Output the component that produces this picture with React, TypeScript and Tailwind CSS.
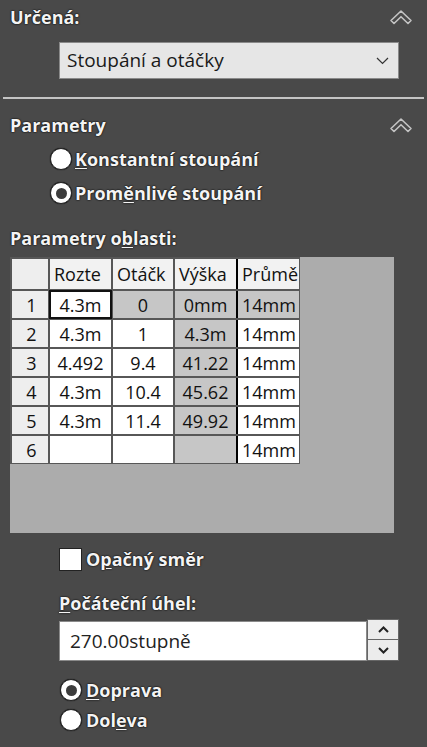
import React from "react";

const FONT = { fontFamily: '"Open Sans", "Noto Sans", sans-serif' };

function Chevrons() {
  return (
    <svg width="24" height="18" viewBox="0 0 24 18" className="shrink-0">
      <path d="M2 12.5 L12 3 L22 12.5 L19 15.5 L12 8.7 L5 15.5 Z" fill="none" stroke="#c4c4c4" strokeWidth="1.6" strokeLinejoin="round" />
    </svg>
  );
}

function Radio({ checked }: { checked?: boolean }) {
  return (
    <span className="w-[22px] h-[22px] rounded-full bg-white border border-[#222] flex items-center justify-center shrink-0 shadow-[0_0_1px_#000]">
      {checked && <span className="w-[11px] h-[11px] rounded-full bg-[#3c3c3c]" />}
    </span>
  );
}

const label = "text-[#f4f4f4] font-bold text-[18px] leading-none [text-shadow:0_0_2px_#000,0_0_1px_#000]";

type Cell = { t: string; g?: boolean; sel?: boolean };

const rows: Cell[][] = [
  [{ t: "4.3m", sel: true }, { t: "0", g: true }, { t: "0mm", g: true }, { t: "14mm", g: true }],
  [{ t: "4.3m" }, { t: "1" }, { t: "4.3m", g: true }, { t: "14mm" }],
  [{ t: "4.492" }, { t: "9.4" }, { t: "41.22", g: true }, { t: "14mm" }],
  [{ t: "4.3m" }, { t: "10.4" }, { t: "45.62", g: true }, { t: "14mm" }],
  [{ t: "4.3m" }, { t: "11.4" }, { t: "49.92", g: true }, { t: "14mm" }],
  [{ t: "" }, { t: "" }, { t: "", g: true }, { t: "14mm" }],
];

const headers = ["Rozte", "Otáčk", "Výška", "Průmě"];

export default function App() {
  return (
    <div style={FONT} className="w-[427px] h-[747px] bg-[#494949] overflow-hidden flex flex-col">
      {/* Určená */}
      <div className="h-[34px] flex items-center justify-between pl-[10px] pr-[14px]">
        <span className={label}>Určená:</span>
        <Chevrons />
      </div>
      <div className="mt-[8px] ml-[59px] w-[340px] h-[37px] bg-[#e6e6e6] border border-[#8a8a8a] flex items-center justify-between pl-[7px] pr-[9px]">
        <span className="text-[19px] leading-none text-[#1a1a1a]">Stoupání a otáčky</span>
        <svg width="13" height="8" viewBox="0 0 13 8">
          <path d="M1 1 L6.5 6.5 L12 1" fill="none" stroke="#333" strokeWidth="1.2" />
        </svg>
      </div>
      <div className="mt-[18px] mx-[3px] h-[2px] bg-[#c4c4c4]" />

      {/* Parametry */}
      <div className="mt-[9px] h-[34px] flex items-center justify-between pl-[10px] pr-[14px]">
        <span className={label}>Parametry</span>
        <Chevrons />
      </div>
      <div className="h-[34px] flex items-center pl-[50px] gap-[3px]">
        <Radio />
        <span className={label}>
          <span className="underline underline-offset-2">K</span>onstantní stoupání
        </span>
      </div>
      <div className="h-[34px] flex items-center pl-[50px] gap-[3px]">
        <Radio checked />
        <span className={label}>
          Prom<span className="underline underline-offset-2">ě</span>nlivé stoupání
        </span>
      </div>
      <div className="mt-[11px] h-[34px] flex items-center pl-[10px]">
        <span className={label}>
          Parametry o<span className="underline underline-offset-2">b</span>lasti:
        </span>
      </div>

      {/* Table area */}
      <div className="mt-[2px] ml-[10px] w-[384px] h-[276px] bg-[#acacac] flex items-start">
        <div className="grid grid-cols-[36px_61px_60px_61px_61px] grid-rows-[30px_repeat(6,27px)] gap-[2px] bg-[#575757] pt-[2px] pl-[2px] pr-[1px] pb-[1px]">
          <div className="bg-[#eeeeee]" />
          {headers.map((h, i) => (
            <div
              key={h}
              className={`bg-[#f2f2f2] overflow-hidden whitespace-nowrap pl-[4px] flex items-center text-[18px] leading-none text-[#111] ${i === 3 ? "shadow-[-2px_0_0_#000]" : ""}`}
            >
              {h}
            </div>
          ))}
          {rows.map((r, ri) => (
            <React.Fragment key={ri}>
              <div className="bg-[#eeeeee] flex items-center justify-center text-[18px] leading-none text-[#111] pl-[3px]">{ri + 1}</div>
              {r.map((c, ci) => (
                <div
                  key={ci}
                  className={`${c.g ? "bg-[#c6c6c6]" : "bg-white"} flex items-center ${ci === 3 ? "justify-start pl-[4px] shadow-[-2px_0_0_#000]" : "justify-center"} text-[18px] leading-none text-[#111] whitespace-nowrap overflow-hidden ${c.sel ? "outline-2 outline-[#111] -outline-offset-1" : ""}`}
                >
                  {c.t}
                </div>
              ))}
            </React.Fragment>
          ))}
        </div>
      </div>

      {/* Opačný směr */}
      <div className="mt-[14px] h-[24px] flex items-center pl-[59px] gap-[4px]">
        <span className="w-[23px] h-[23px] bg-white border border-[#222] shrink-0" />
        <span className={label}>
          O<span className="underline underline-offset-2">p</span>ačný směr
        </span>
      </div>

      <div className="mt-[22px] h-[20px] flex items-center pl-[59px]">
        <span className={label}>
          <span className="underline underline-offset-2">P</span>očáteční úhel:
        </span>
      </div>
      <div className="mt-[8px] ml-[59px] flex">
        <div className="w-[308px] h-[40px] bg-white border border-[#8a8a8a] flex items-center pl-[10px] text-[19px] leading-none text-[#222]">
          270.00stupně
        </div>
        <div className="w-[32px] h-[42px] -mt-[2px] flex flex-col">
          <div className="h-[21px] bg-[#ececec] border border-[#666] flex items-center justify-center">
            <svg width="11" height="7" viewBox="0 0 11 7">
              <path d="M1 6 L5.5 1.5 L10 6" fill="none" stroke="#222" strokeWidth="2" />
            </svg>
          </div>
          <div className="h-[21px] bg-[#ececec] border border-[#666] border-t-0 flex items-center justify-center">
            <svg width="11" height="7" viewBox="0 0 11 7">
              <path d="M1 1 L5.5 5.5 L10 1" fill="none" stroke="#222" strokeWidth="2" />
            </svg>
          </div>
        </div>
      </div>

      <div className="mt-[17px] h-[24px] flex items-center pl-[60px] gap-[4px]">
        <Radio checked />
        <span className={label}>
          <span className="underline underline-offset-2">D</span>oprava
        </span>
      </div>
      <div className="mt-[6px] h-[24px] flex items-center pl-[60px] gap-[4px]">
        <Radio />
        <span className={label}>
          Dol<span className="underline underline-offset-2">e</span>va
        </span>
      </div>
    </div>
  );
}
